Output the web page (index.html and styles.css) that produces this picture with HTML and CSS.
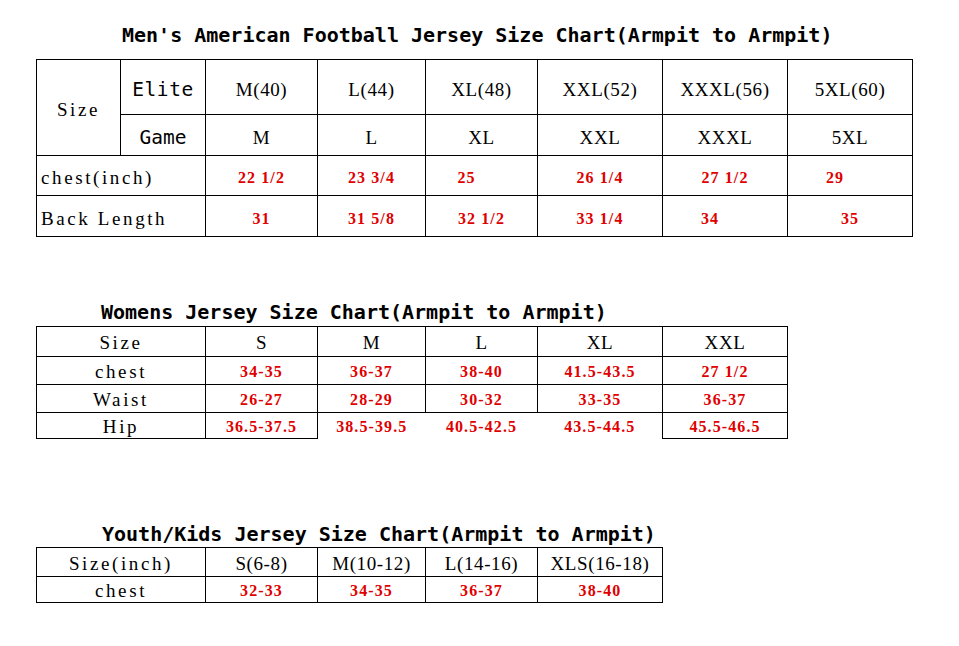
FILE: index.html
```html
<!DOCTYPE html>
<html>
<head>
<meta charset="utf-8">
<link rel="stylesheet" href="styles.css">
</head>
<body>
<div class="page">
  <h1 class="title title-men">Men's American Football Jersey Size Chart(Armpit to Armpit)</h1>
  <table class="chart men">
    <colgroup>
      <col class="c84"><col class="c85"><col class="c112"><col class="c108"><col class="c112"><col class="c125"><col class="c125"><col class="c125">
    </colgroup>
    <tr class="r55">
      <td rowspan="2" class="lbl">Size</td>
      <td class="sans elite">Elite</td>
      <td class="hd">M(40)</td><td class="hd">L(44)</td><td class="hd">XL(48)</td><td class="hd">XXL(52)</td><td class="hd">XXXL(56)</td><td class="hd">5XL(60)</td>
    </tr>
    <tr class="r41">
      <td class="sans">Game</td>
      <td class="hd">M</td><td class="hd">L</td><td class="hd">XL</td><td class="hd">XXL</td><td class="hd">XXXL</td><td class="hd">5XL</td>
    </tr>
    <tr class="r40">
      <td colspan="2" class="lbl left">chest(inch)</td>
      <td class="num">22 1/2</td><td class="num">23 3/4</td><td class="num"><span class="pad">25</span></td><td class="num">26 1/4</td><td class="num">27 1/2</td><td class="num"><span class="pad">29</span></td>
    </tr>
    <tr class="r41">
      <td colspan="2" class="lbl left">Back Length</td>
      <td class="num">31</td><td class="num">31 5/8</td><td class="num">32 1/2</td><td class="num">33 1/4</td><td class="num"><span class="pad">34</span></td><td class="num">35</td>
    </tr>
  </table>

  <h2 class="title women-title">Womens Jersey Size Chart(Armpit to Armpit)</h2>
  <table class="chart women">
    <colgroup>
      <col class="c169"><col class="c112"><col class="c108"><col class="c112"><col class="c125"><col class="c125">
    </colgroup>
    <tr class="r30">
      <td class="lbl">Size</td><td class="hd">S</td><td class="hd">M</td><td class="hd">L</td><td class="hd">XL</td><td class="hd">XXL</td>
    </tr>
    <tr class="r28">
      <td class="lbl">chest</td><td class="num">34-35</td><td class="num">36-37</td><td class="num">38-40</td><td class="num">41.5-43.5</td><td class="num">27 1/2</td>
    </tr>
    <tr class="r28">
      <td class="lbl">Waist</td><td class="num">26-27</td><td class="num">28-29</td><td class="num">30-32</td><td class="num">33-35</td><td class="num">36-37</td>
    </tr>
    <tr class="r26">
      <td class="lbl">Hip</td><td class="num">36.5-37.5</td><td class="num open-l">38.5-39.5</td><td class="num open-m">40.5-42.5</td><td class="num open-r">43.5-44.5</td><td class="num">45.5-46.5</td>
    </tr>
  </table>

  <h2 class="title youth-title">Youth/Kids Jersey Size Chart(Armpit to Armpit)</h2>
  <table class="chart youth">
    <colgroup>
      <col class="c169"><col class="c112"><col class="c108"><col class="c112"><col class="c125">
    </colgroup>
    <tr class="r29">
      <td class="lbl">Size(inch)</td><td class="hd">S(6-8)</td><td class="hd">M(10-12)</td><td class="hd">L(14-16)</td><td class="hd">XLS(16-18)</td>
    </tr>
    <tr class="r26">
      <td class="lbl">chest</td><td class="num">32-33</td><td class="num">34-35</td><td class="num">36-37</td><td class="num">38-40</td>
    </tr>
  </table>
</div>
</body>
</html>
```

FILE: styles.css
```css
html, body {
  margin: 0;
  padding: 0;
  background: #fff;
}
.page {
  width: 959px;
  height: 646px;
  padding: 0 0 0 36px;
  box-sizing: border-box;
  overflow: hidden;
  color: #000;
}
.title {
  margin: 0;
  font-family: "DejaVu Sans Mono", monospace;
  font-weight: bold;
  font-size: 20px;
  line-height: 24px;
  white-space: pre;
}
.title-men {
  padding: 23px 0 0 86px;
  height: 36px;
}
.women-title {
  padding: 63px 0 0 65px;
  height: 26px;
}
.youth-title {
  padding: 83px 0 0 66px;
  height: 25px;
}
.chart {
  border-collapse: collapse;
  table-layout: fixed;
}
.men { width: 877px; }
.women { width: 752px; }
.youth { width: 627px; }
.c84 { width: 84px; }
.c85 { width: 85px; }
.c108 { width: 108px; }
.c112 { width: 112px; }
.c125 { width: 125px; }
.c169 { width: 169px; }
.chart td {
  border: 1px solid #000;
  padding: 0;
  text-align: center;
  vertical-align: middle;
  white-space: pre;
  overflow: hidden;
}
.men td { padding-top: 5px; }
.women td { padding-top: 2px; }
.youth td { padding-top: 3px; }
.men .r55 td { height: 49px; }
.men .r41 td { height: 35px; }
.men .r40 td { height: 34px; }
.women .r30 td { height: 27px; }
.women .r28 td { height: 25px; }
.women .r26 td { height: 23px; }
.youth .r29 td { height: 25px; }
.youth .r26 td { height: 22px; }
.lbl, .hd {
  font-family: "Liberation Serif", "DejaVu Serif", serif;
  font-size: 19px;
  line-height: 20px;
  letter-spacing: 2.6px;
}
.hd {
  letter-spacing: 0.6px;
}
.left {
  text-align: left !important;
  padding-left: 4px !important;
}
.sans {
  font-family: "DejaVu Sans Mono", monospace;
  font-size: 19.5px;
  line-height: 22px;
}
.elite {
  letter-spacing: 0.6px;
}
.num {
  font-family: "Liberation Serif", "DejaVu Serif", serif;
  font-weight: bold;
  font-size: 16px;
  letter-spacing: 1.1px;
  color: #e00000;
}
.pad {
  display: inline-block;
  width: 48px;
  text-align: left;
}
.chart td.open-l {
  border-right: none;
  border-bottom: none;
}
.chart td.open-m {
  border-left: none;
  border-right: none;
  border-bottom: none;
}
.chart td.open-r {
  border-left: none;
  border-bottom: none;
}
```
